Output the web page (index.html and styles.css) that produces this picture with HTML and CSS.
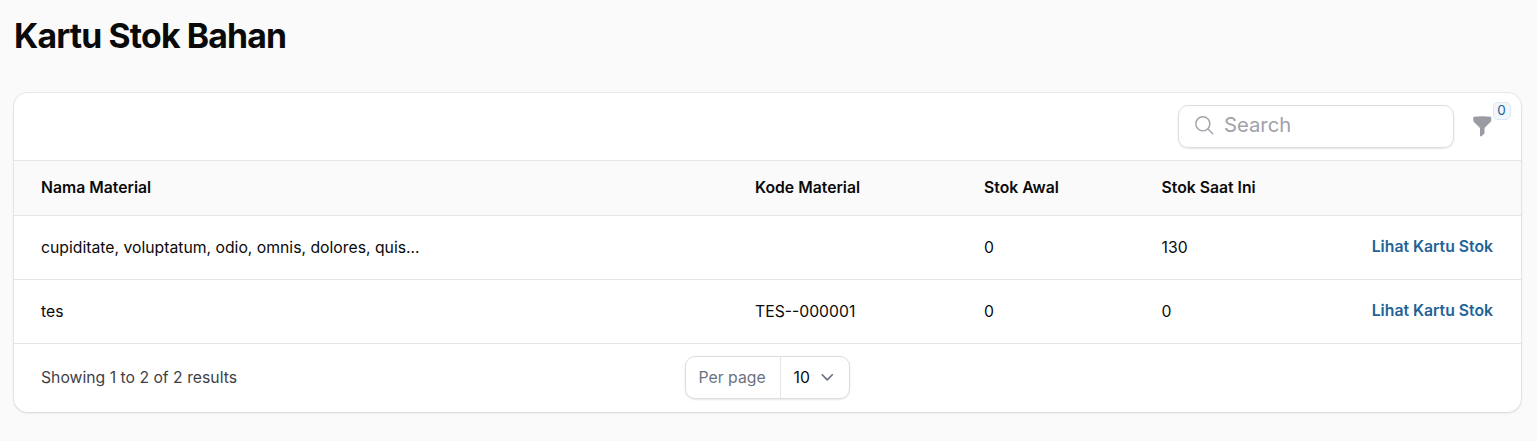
FILE: index.html
```html
<!DOCTYPE HTML>
<html>

<head>
  <title>Kartu Stok Bahan</title>
  <meta name="viewport" content="width=device-width, initial-scale=1.0">
  <link rel="stylesheet" href="styles.css">
</head>

<body>
  <h1 class="title">Kartu Stok Bahan</h1>

  <div class="card">
    <div class="toolbar">
      <div class="search">
        <svg class="search-icon" viewBox="0 0 24 24" fill="none" stroke="currentColor" stroke-width="1.5">
          <path stroke-linecap="round" stroke-linejoin="round" d="M21 21l-5.197-5.197m0 0A7.5 7.5 0 105.196 5.196a7.5 7.5 0 0010.607 10.607z" />
        </svg>
        <span class="search-text">Search</span>
      </div>
      <div class="filter">
        <svg class="filter-icon" viewBox="0 0 20 20" fill="currentColor">
          <path fill-rule="evenodd" clip-rule="evenodd" d="M2.628 1.601C5.028 1.206 7.49 1 10 1s4.973.206 7.372.601a.75.75 0 01.628.74v2.288a2.25 2.25 0 01-.659 1.59l-4.682 4.683a2.25 2.25 0 00-.659 1.59v3.037c0 .684-.31 1.33-.844 1.757l-1.937 1.55A.75.75 0 018 18.25v-5.757a2.25 2.25 0 00-.659-1.591L2.659 6.22A2.25 2.25 0 012 4.629V2.34a.75.75 0 01.628-.74z" />
        </svg>
        <span class="badge">0</span>
      </div>
    </div>

    <table class="table">
      <thead>
        <tr>
          <th class="col-name">Nama Material</th>
          <th class="col-code">Kode Material</th>
          <th class="col-start">Stok Awal</th>
          <th class="col-now">Stok Saat Ini</th>
          <th></th>
        </tr>
      </thead>
      <tbody>
        <tr>
          <td>cupiditate, voluptatum, odio, omnis, dolores, quis...</td>
          <td></td>
          <td>0</td>
          <td>130</td>
          <td class="action"><a href="#">Lihat Kartu Stok</a></td>
        </tr>
        <tr>
          <td>tes</td>
          <td>TES--000001</td>
          <td>0</td>
          <td>0</td>
          <td class="action"><a href="#">Lihat Kartu Stok</a></td>
        </tr>
      </tbody>
    </table>

    <div class="footer">
      <div class="results">Showing 1 to 2 of 2 results</div>
      <div class="perpage">
        <span class="perpage-label">Per page</span>
        <span class="perpage-value">10
          <svg class="chevron" viewBox="0 0 20 20" fill="none" stroke="currentColor" stroke-width="1.5">
            <path stroke-linecap="round" stroke-linejoin="round" d="M5.5 7.8l4.5 4.5 4.5-4.5" />
          </svg>
        </span>
      </div>
      <div></div>
    </div>
  </div>
</body>

</html>
```

FILE: styles.css
```css
html {
  font-family: Inter, "Noto Sans", sans-serif;
}

body {
  margin: 0;
  padding: 16px 16px 28px 14px;
  background-color: #FAFAFA;
  color: #0A0A0A;
}

.title {
  margin: 0 0 37px;
  font-size: 33.75px;
  line-height: 40px;
  font-weight: 700;
  letter-spacing: -0.84px;
}

/* -------------------------------- CARD ------------------------------- */

.card {
  background-color: white;
  border-radius: 13.5px;
  box-shadow: 0 0 0 1px rgba(10, 10, 10, .06), 0 1px 3px rgba(10, 10, 10, .1);
  overflow: hidden;
}

/* ------------------------------ TOOLBAR ------------------------------ */

.toolbar {
  display: flex;
  justify-content: flex-end;
  align-items: center;
  gap: 17px;
  height: 68px;
  padding-right: 28px;
  box-sizing: border-box;
  border-bottom: 1px solid #E5E5E5;
}

.search {
  display: flex;
  align-items: center;
  gap: 9px;
  width: 276px;
  height: 43px;
  padding: 0 0 3px 14px;
  box-sizing: border-box;
  border: 1px solid #DDDDE0;
  border-radius: 10px;
  box-shadow: 0 1px 2px rgba(10, 10, 10, .1);
}

.search-icon {
  width: 22.5px;
  height: 22.5px;
  color: #A1A1AA;
}

.search-text {
  margin-bottom: 2px;
  font-size: 20.25px;
  color: #A1A1AA;
}

.filter {
  position: relative;
  width: 22.5px;
  height: 22.5px;
  margin-bottom: 1px;
  color: #9B9BA3;
}

.filter-icon {
  display: block;
  width: 22.5px;
  height: 22.5px;
}

.badge {
  position: absolute;
  top: -13px;
  left: 22px;
  width: 18px;
  height: 18px;
  box-sizing: border-box;
  border: 1px solid #DCE9F3;
  border-radius: 5px;
  background-color: #F1F6FA;
  color: #1F6396;
  font-size: 13.5px;
  line-height: 15px;
  text-align: center;
}

/* ------------------------------- TABLE ------------------------------- */

.table {
  width: 100%;
  border-collapse: collapse;
  table-layout: fixed;
  font-size: 15.75px;
}

.table th {
  height: 54px;
  padding: 0 0 0 27px;
  box-sizing: border-box;
  background-color: #FAFAFA;
  border-bottom: 1px solid #E5E5E5;
  text-align: left;
  font-weight: 600;
}

.table td {
  height: 64px;
  padding: 0 0 0 27px;
  box-sizing: border-box;
  border-bottom: 1px solid #E5E5E5;
}

.col-name {
  width: 714px;
}

.col-code {
  width: 229px;
}

.col-start {
  width: 177.5px;
}

.col-now {
  width: 150px;
}

.table td.action {
  padding: 0 28px 2px 0;
  text-align: right;
  white-space: nowrap;
}

.action a {
  color: #1F6396;
  font-weight: 600;
  text-decoration: none;
}

/* ------------------------------- FOOTER ------------------------------ */

.footer {
  display: grid;
  grid-template-columns: 1fr auto 1fr;
  align-items: center;
  height: 68px;
  padding: 0 27px;
}

.results {
  font-size: 15.75px;
  color: #3F3F46;
}

.perpage {
  display: flex;
  align-items: center;
  height: 43px;
  box-sizing: border-box;
  border: 1px solid #DDDDE0;
  border-radius: 10px;
  box-shadow: 0 1px 2px rgba(10, 10, 10, .1);
  font-size: 15.75px;
}

.perpage-label {
  display: flex;
  align-items: center;
  height: 100%;
  padding: 0 14px 0 13px;
  border-right: 1px solid #E5E5E5;
  color: #6B7280;
}

.perpage-value {
  display: flex;
  align-items: center;
  gap: 6px;
  padding: 0 11px 0 13px;
}

.chevron {
  width: 22.5px;
  height: 22.5px;
  color: #6B7280;
}
```
